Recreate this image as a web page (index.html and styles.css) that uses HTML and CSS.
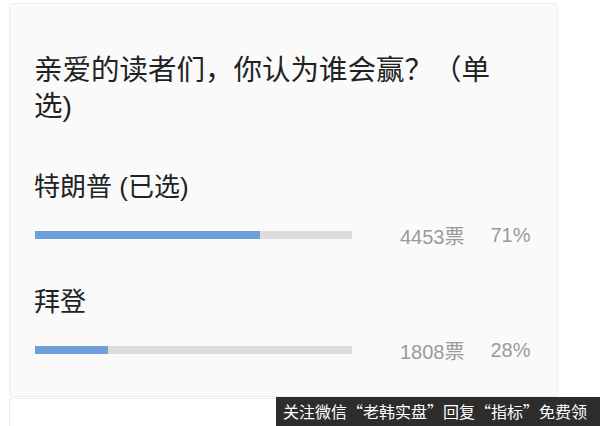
FILE: index.html
```html
<!DOCTYPE html>
<html lang="zh-CN">
<head>
<meta charset="utf-8">
<title>投票</title>
<link rel="stylesheet" href="styles.css">
</head>
<body>
<div class="page">
  <section class="poll">
    <h1 class="poll-title">亲爱的读者们，你认为谁会赢？（单选)</h1>
    <div class="options">
      <div class="option">
        <div class="option-label">特朗普 (已选)</div>
        <div class="option-row">
          <div class="bar"><div class="bar-fill" style="width:71%"></div></div>
          <span class="count">4453票</span>
          <span class="percent">71%</span>
        </div>
      </div>
      <div class="option">
        <div class="option-label">拜登</div>
        <div class="option-row">
          <div class="bar"><div class="bar-fill" style="width:23%"></div></div>
          <span class="count">1808票</span>
          <span class="percent">28%</span>
        </div>
      </div>
    </div>
  </section>
  <section class="next-card"></section>
</div>
<div class="watermark">关注微信“老韩实盘”回复“指标”免费领</div>
</body>
</html>
```
FILE: styles.css
```css
html, body {
  margin: 0;
  padding: 0;
  background: #ffffff;
  overflow: hidden;
}
body {
  width: 600px;
  height: 426px;
  position: relative;
  font-family: "Liberation Sans", "Noto Sans CJK SC", sans-serif;
  color: #333333;
}
.page {
  padding: 3px 0 0 9px;
  display: flex;
  flex-direction: column;
  gap: 1px;
}
.poll {
  width: 549px;
  box-sizing: border-box;
  background: #fafafa;
  border: 1px solid #ececec;
  border-radius: 3px;
  padding: 48px 24px 31px 24px;
}
.poll-title {
  margin: 0;
  font-weight: normal;
  font-size: 28.5px;
  line-height: 36px;
  max-width: 472px;
  color: #222222;
}
.options {
  margin-top: 46px;
  display: flex;
  flex-direction: column;
  gap: 35px;
}
.option-label {
  font-size: 26px;
  line-height: 34px;
  color: #222222;
}
.option-row {
  margin-top: 16px;
  height: 30px;
  display: flex;
  align-items: center;
}
.bar {
  width: 317px;
  height: 8px;
  margin-left: 1px;
  background: #dcdcdc;
}
.bar-fill {
  height: 100%;
  background: #6d9fd9;
}
.count {
  margin-left: 48px;
  font-size: 20px;
  color: #9a9a9a;
}
.percent {
  margin-left: 26px;
  font-size: 20px;
  color: #9a9a9a;
}
.next-card {
  width: 549px;
  height: 40px;
  box-sizing: border-box;
  border: 1px solid #ececec;
  background: #ffffff;
}
.watermark {
  position: absolute;
  left: 276px;
  top: 397px;
  width: 324px;
  height: 29px;
  background: #2d2d2d;
  color: #ffffff;
  font-family: "Noto Sans CJK SC", sans-serif;
  font-size: 16px;
  line-height: 29px;
  padding-left: 7px;
  box-sizing: border-box;
  white-space: nowrap;
  overflow: hidden;
}
```
